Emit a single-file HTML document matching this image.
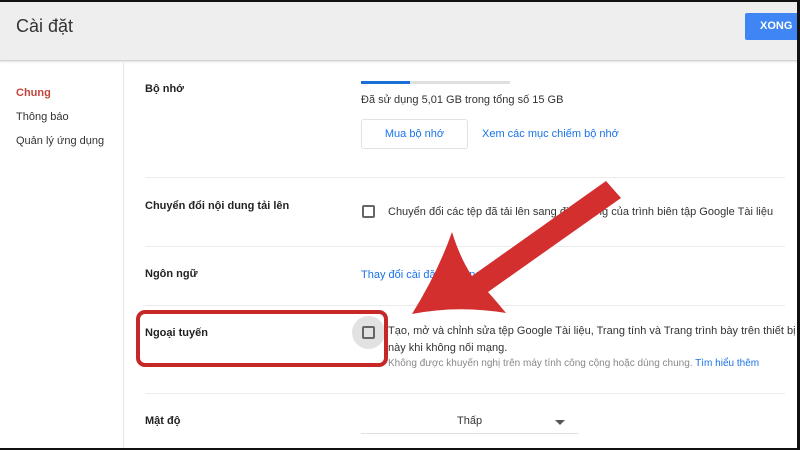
<!DOCTYPE html>
<html><head><meta charset="utf-8"><style>
*{margin:0;padding:0;box-sizing:border-box}
body{width:800px;height:450px;overflow:hidden;background:#fff;font-family:"Liberation Sans",Arial,sans-serif;position:relative;color:#222}
.a{position:absolute;white-space:nowrap}
.hdr{left:0;top:0;width:800px;height:61px;background:#eeeeee;border-bottom:1px solid #d4d4d4;box-shadow:0 1px 2px rgba(0,0,0,.12)}
.sep{position:absolute;left:145px;width:640px;height:1px;background:#ececec}
.lbl{font-size:11px;font-weight:bold;color:#222}
.t{font-size:11px;color:#333}
.link{color:#1a73e8}
.cb{position:absolute;width:13px;height:13px;border:2px solid #666;border-radius:2px}
</style></head><body>
<div class="a hdr"></div>
<div class="a" style="left:16px;top:16px;font-size:18px;color:#333">Cài đặt</div>
<div class="a" style="left:745px;top:13px;width:55px;height:27px;background:#3f86f4;border-radius:2px;color:#fff;font-size:11px;font-weight:bold;line-height:27px;padding-left:15px">XONG</div>
<div class="a" style="left:123px;top:62px;width:1px;height:388px;background:#e6e6e6"></div>
<div class="a" style="left:16px;top:87px;font-size:11px;font-weight:bold;color:#c2463d">Chung</div>
<div class="a" style="left:16px;top:111px;font-size:11px;color:#333">Thông báo</div>
<div class="a" style="left:16px;top:135px;font-size:11px;color:#333">Quản lý ứng dụng</div>

<div class="a lbl" style="left:145px;top:83px">Bộ nhớ</div>
<div class="a" style="left:361px;top:81px;width:149px;height:3px;background:#e0e0e0"></div>
<div class="a" style="left:361px;top:81px;width:49px;height:3px;background:#1a6fd6"></div>
<div class="a t" style="left:361px;top:94px">Đã sử dụng 5,01 GB trong tổng số 15 GB</div>
<div class="a" style="left:361px;top:119px;width:107px;height:30px;border:1px solid #e2e2e2;border-radius:3px;font-size:11px;color:#1a73e8;text-align:center;line-height:28px">Mua bộ nhớ</div>
<div class="a t link" style="left:482px;top:128px">Xem các mục chiếm bộ nhớ</div>
<div class="sep" style="top:177px"></div>

<div class="a lbl" style="left:145px;top:200px">Chuyển đổi nội dung tải lên</div>
<div class="cb" style="left:362px;top:205px"></div>
<div class="a t" style="left:388px;top:206px">Chuyển đổi các tệp đã tải lên sang định dạng của trình biên tập Google Tài liệu</div>
<div class="sep" style="top:246px"></div>

<div class="a lbl" style="left:145px;top:268px">Ngôn ngữ</div>
<div class="a t link" style="left:361px;top:268px">Thay đổi cài đặt ngôn ngữ ↗</div>
<div class="sep" style="top:305px"></div>

<div class="a" style="left:352px;top:316px;width:33px;height:33px;border-radius:50%;background:#e2e2e2"></div>
<div class="cb" style="left:362px;top:326px"></div>
<div class="a lbl" style="left:145px;top:327px">Ngoại tuyến</div>
<div class="a t" style="left:388px;top:325px">Tạo, mở và chỉnh sửa tệp Google Tài liệu, Trang tính và Trang trình bày trên thiết bị</div>
<div class="a t" style="left:388px;top:342px">này khi không nối mạng.</div>
<div class="a" style="left:388px;top:358px;font-size:10px;color:#888">Không được khuyến nghị trên máy tính công cộng hoặc dùng chung. <span style="color:#1a73e8">Tìm hiểu thêm</span></div>
<div class="sep" style="top:393px"></div>

<div class="a lbl" style="left:145px;top:415px">Mật độ</div>
<div class="a t" style="left:457px;top:415px">Thấp</div>
<div class="a" style="left:555px;top:420px;width:0;height:0;border-left:5px solid transparent;border-right:5px solid transparent;border-top:5px solid #555"></div>
<div class="a" style="left:361px;top:433px;width:217px;height:1px;background:#e0e0e0"></div>

<svg class="a" style="left:0;top:0" width="800" height="450">
<rect x="138" y="312" width="248" height="53" rx="7" fill="none" stroke="#c62828" stroke-width="4"/>
<path d="M412 314 Q438 272 452 232 Q460 258 472 276 L606 181 L621 198 L488 292 Q497 302 506 313 Q458 305 412 314 Z" fill="#d32f2f"/>
<rect x="0" y="0" width="800" height="2" fill="#111"/>
<rect x="797" y="0" width="3" height="450" fill="#111"/>
<rect x="0" y="448" width="800" height="2" fill="#111"/>
</svg>
</body></html>
